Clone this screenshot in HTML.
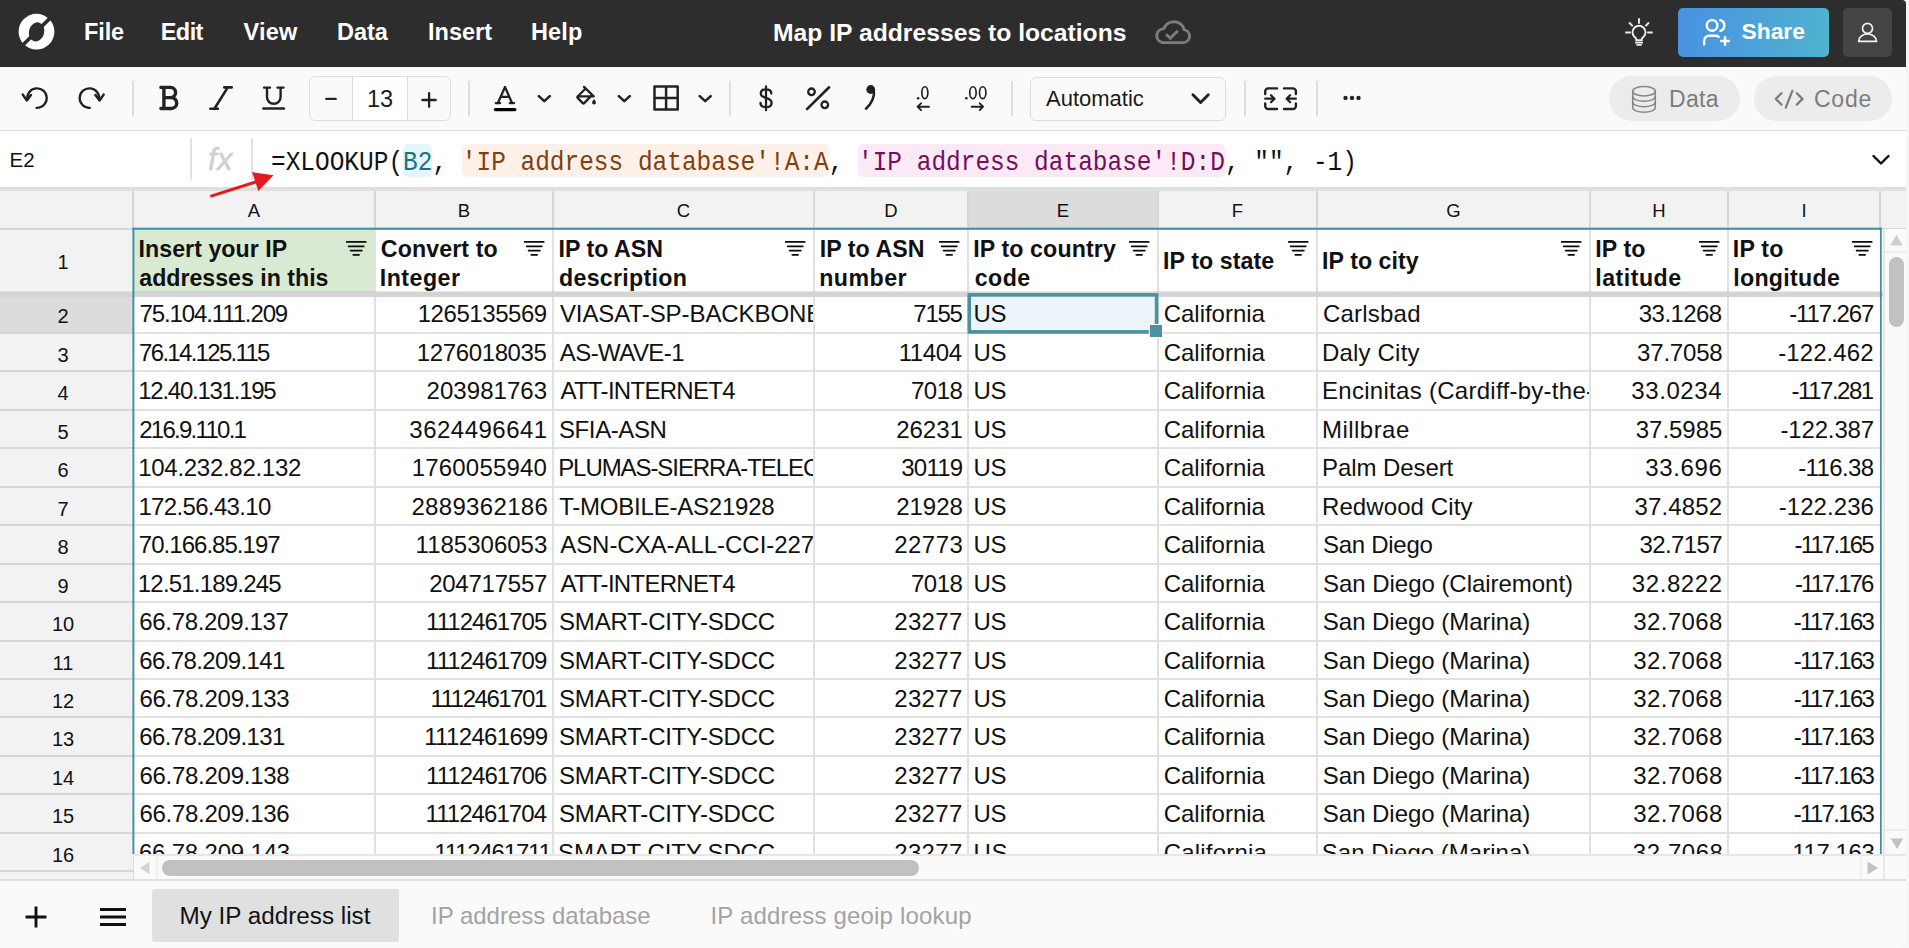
<!DOCTYPE html>
<html><head><meta charset="utf-8"><title>Map IP addresses to locations</title>
<style>
*{box-sizing:border-box;margin:0;padding:0}
html,body{width:1909px;height:948px;overflow:hidden;background:#f6f6f6;font-family:"Liberation Sans",sans-serif;color:#111}
#app{position:absolute;left:0;top:0;width:1906px;height:948px;overflow:hidden;border-radius:0 4px 7px 0;background:#fafafa}
.abs{position:absolute}
.t{position:absolute;white-space:nowrap}
.mono{font-family:"Liberation Mono",monospace}

#topbar{position:absolute;left:0;top:0;width:1906px;height:67px;background:#2d2d2d}
.menu{position:absolute;top:17px;height:30px;line-height:30px;font-weight:bold;font-size:23.500px;color:#fff;white-space:nowrap}
#title{position:absolute;top:18px;height:30px;line-height:30px;font-weight:bold;font-size:24.700px;color:#fff;white-space:nowrap}

#toolbar{position:absolute;left:0;top:67px;width:1906px;height:64px;background:#fafafa;border-bottom:1px solid #dcdcdc}
#tbsvg{position:absolute;left:0;top:0}
.k{fill:none;stroke:#222;stroke-linecap:round;stroke-linejoin:round}
.pill{position:absolute;top:9px;height:45px;border-radius:23px;background:#ececec;color:#7c7c7c;font-size:23px;line-height:45px}
.tbx{position:absolute;border:1px solid #dcdcdc;border-radius:6px;background:#fafafa}

#fbar{position:absolute;left:0;top:131px;width:1906px;height:56px;background:#fff}
#fband{position:absolute;left:0;top:187px;width:1906px;height:4px;background:#dfdfdf}
.fsep{position:absolute;top:7px;height:42px;width:2px;background:#e2e2e2}
#formula{position:absolute;left:271px;top:16.800px;font-size:24.460px;line-height:32px;transform:scaleY(1.140);transform-origin:0 22.520px;white-space:pre;color:#111;font-family:"Liberation Mono",monospace}
#formula .r1{color:#1b7286}
#formula .r2{color:#80400f}
#formula .r3{color:#730f5c}
.hl{position:absolute;top:13px;height:32.500px;border-radius:5px}

#grid{position:absolute;left:0;top:191px;width:1906px;height:689px;background:#fff;overflow:hidden}
.ch{position:absolute;top:0;height:37px;background:#f2f2f2;border-right:2px solid #d6d6d6;text-align:center;font-size:18.500px;line-height:40px;color:#111}
.rh{position:absolute;left:0;width:133px;padding-right:7px;background:#f2f2f2;text-align:center;font-size:20px;color:#111}
.c{position:absolute;white-space:nowrap;overflow:hidden;font-size:24px;line-height:38px;color:#111;padding:0 6px}
.c.r{text-align:right}
.c b{font-weight:normal;margin:0 -3.840px 0 -1.100px}
.c i{font-style:normal;margin:0 -1.250px}
.c.n{letter-spacing:calc(var(--r) + 0.860px)}
.hc{position:absolute;overflow:hidden;font-size:23.200px;line-height:29px;font-weight:bold;color:#111;padding:0 6px;white-space:nowrap}
.vl{position:absolute;width:2px;background:#e1e1e1}
.ghl{position:absolute;height:2px;background:#e1e1e1}
.flt{position:absolute;fill:none;stroke:#0a0a0a;stroke-width:1.750;stroke-linecap:round}

#hscroll{position:absolute;left:133px;top:854px;width:1773px;height:26px;background:#fafafa;border-top:2px solid #e7e7e7}
#vscroll{position:absolute;left:1883px;top:229px;width:23px;height:626px;background:#fafafa;border-left:2px solid #e7e7e7}
#bbar{position:absolute;left:0;top:879px;width:1906px;height:69px;background:#fafafa;border-top:2px solid #dfdfdf}
.tab{position:absolute;top:8px;height:53px;line-height:53px;font-size:24px;white-space:nowrap;color:#a3a3a3}
</style></head>
<body><div id="app">
<div id="topbar">
<svg class="abs" style="left:16px;top:12px" width="42" height="42" viewBox="16 12 42 42">
<circle cx="36.500" cy="31.700" r="17.900" fill="#fff"/>
<ellipse cx="36.600" cy="31.900" rx="7.600" ry="9.700" transform="rotate(14 36.600 31.900)" fill="#2d2d2d"/>
<path d="M50.600 17.600 L22.600 45.200" stroke="#2d2d2d" stroke-width="3.600"/>
</svg>
<div class="menu" style="left:84px;letter-spacing:-0.1px">File</div>
<div class="menu" style="left:160.8px;letter-spacing:-0.6px">Edit</div>
<div class="menu" style="left:243.5px;letter-spacing:0.2px">View</div>
<div class="menu" style="left:337px;letter-spacing:0px">Data</div>
<div class="menu" style="left:428px;letter-spacing:0px">Insert</div>
<div class="menu" style="left:531px;letter-spacing:0.15px">Help</div>
<div id="title" style="left:773px">Map IP addresses to locations</div>
<svg class="abs" style="left:1153px;top:17px" width="40" height="32" viewBox="0 0 40 32" fill="none" stroke="#7c7c7c" stroke-width="3" stroke-linecap="round" stroke-linejoin="round">
<g transform="translate(-0.300 0.300) scale(1 0.940)"><path d="M10 27 h20 a7 7 0 0 0 1.500 -13.800 a10.500 10.500 0 0 0 -20.300 -1.200 a7.600 7.600 0 0 0 -1.200 15 z"/>
<path d="M13.300 18 l4.300 4.300 l7.500 -8" stroke-linecap="butt" stroke-linejoin="miter"/></g>
</svg>
<svg class="abs" style="left:1620px;top:12px" width="38" height="40" viewBox="1620 12 38 40" fill="none" stroke="#ececec" stroke-width="1.900" stroke-linecap="butt" stroke-linejoin="round">
<path d="M1639 18.300 V23.800 M1629.100 22.500 L1632.700 26.200 M1649 22.500 L1645.400 26.200 M1625.300 32.500 H1630.800 M1647.200 32.500 H1652.700"/>
<path d="M1636.200 40.200 V39 Q1636 37.800 1634.400 36.900 A6.500 6.500 0 1 1 1643.600 36.900 Q1642 37.800 1641.800 39 V40.200 Z"/>
<path d="M1635 42.600 H1643 M1636.400 44.800 H1641.700" stroke-width="1.700"/>
</svg>
<div class="abs" style="left:1678px;top:8px;width:151px;height:49px;border-radius:5px;background:linear-gradient(100deg,#4a90e2 0%,#4fb4cf 100%)">
<svg class="abs" style="left:22px;top:8px" width="36" height="34" viewBox="1700 16 36 34" fill="none" stroke="#fff" stroke-width="2.400" stroke-linecap="round" stroke-linejoin="round">
<circle cx="1712.100" cy="25.400" r="5.300"/>
<path d="M1704.200 44.200 V40.700 a5 5 0 0 1 5 -5 h6.300 a5 5 0 0 1 3.100 1.100"/>
<path d="M1720.400 20.100 a5.600 5.600 0 0 1 0 10.700"/>
<path d="M1725.050 36.200 v9.600 M1720.200 41 h9.700" stroke-linecap="butt"/>
</svg>
<div class="t" style="left:63.500px;top:8.200px;font-size:22.800px;line-height:30px;font-weight:bold;color:#fff">Share</div>
</div>
<div class="abs" style="left:1843px;top:8px;width:49px;height:49px;border-radius:5px;background:#444">
<svg class="abs" style="left:10px;top:10px" width="30" height="30" viewBox="1853 18 30 30" fill="none" stroke="#f2f2f2" stroke-width="1.700" stroke-linejoin="round">
<circle cx="1867.500" cy="28.400" r="5"/>
<path d="M1858.600 41.400 a8.950 7.400 0 0 1 17.900 0 z"/>
</svg></div>
</div>
<div id="toolbar">
<div class="tbx" style="left:309px;top:9px;width:142px;height:45px;overflow:hidden">
<div class="abs" style="left:42px;top:0;width:56px;height:43px;background:#fff;border-left:1px solid #dcdcdc;border-right:1px solid #dcdcdc"></div>
<div class="t" style="left:42px;width:56px;text-align:center;top:7px;font-size:23.500px;line-height:30px;color:#1a1a1a">13</div>
</div>
<div class="tbx" style="left:1030px;top:10px;width:196px;height:44px">
<div class="t" style="left:15px;top:6px;font-size:22px;line-height:30px;color:#1a1a1a">Automatic</div>
</div>
<svg id="tbsvg" width="1906" height="64" viewBox="0 67 1906 64"><path class="k" stroke-width="2.300" stroke-linecap="butt" d="M27.400 99.800 A9.750 9.750 0 1 1 36.600 107.800"/>
<path class="k" stroke-width="2.500" stroke-linecap="butt" stroke-linejoin="miter" d="M22.800 94.600 L26.700 100.400 L31 95"/>
<path class="k" stroke-width="2.300" stroke-linecap="butt" d="M99 99.800 A9.750 9.750 0 1 0 89.800 107.800"/>
<path class="k" stroke-width="2.500" stroke-linecap="butt" stroke-linejoin="miter" d="M103.600 94.600 L99.700 100.400 L95.400 95"/>
<rect x="132" y="81" width="2" height="35" fill="#dedede"/>
<rect x="468" y="81" width="2" height="35" fill="#dedede"/>
<rect x="729" y="81" width="2" height="35" fill="#dedede"/>
<rect x="1011" y="81" width="2" height="35" fill="#dedede"/>
<rect x="1244" y="81" width="2" height="35" fill="#dedede"/>
<rect x="1316" y="81" width="2" height="35" fill="#dedede"/>
<path class="k" stroke-width="3.400" d="M163.900 87.400 V108.500 M160.900 87.400 H170.500 a5.100 5.100 0 0 1 0 10.200 H163.900 M163.900 97.600 H171.300 a5.450 5.450 0 0 1 0 10.900 H160.900"/>
<path class="k" stroke-width="2.600" d="M224.300 87.400 H231.700 M210.400 108.800 H217.900 M227.800 87.400 L214.400 108.800"/>
<path class="k" stroke-width="2.400" d="M264 87.600 H270 M277.500 87.600 H283.500 M267 87.600 V97 a6.800 6.800 0 0 0 13.600 0 V87.600"/>
<path class="k" stroke-width="2.700" d="M263.500 108.500 H283.800"/>
<path class="k" stroke-width="2.400" stroke-linecap="butt" d="M326.400 98.900 H335.600"/>
<path class="k" stroke-width="2.300" stroke-linecap="butt" d="M422.400 100 H435.800 M429.100 93.200 V106.800"/>
<path class="k" stroke-width="2.300" d="M497.900 103 L505 87 L512 103 M500.600 96.800 H509.400 M495.800 103.100 H500.200 M509.800 103.100 H514.100"/>
<path d="M495.400 109.600 H514.900" style="fill:none;stroke:#000;stroke-width:3.200;stroke-linecap:round"/>
<path class="k" stroke-width="2.600" stroke-linecap="butt" stroke-linejoin="miter" d="M538.80 96.100 L544.3 101.100 L549.80 96.100"/>
<path class="k" stroke-width="2.600" stroke-linecap="butt" stroke-linejoin="miter" d="M618.80 96.100 L624.3 101.100 L629.80 96.100"/>
<path class="k" stroke-width="2.600" stroke-linecap="butt" stroke-linejoin="miter" d="M699.70 96.100 L705.2 101.100 L710.70 96.100"/>
<path class="k" stroke-width="2.300" d="M584 86.900 L593.700 96.400 H577.600 M585.600 88.500 L577.600 96.500 Q576.900 97.200 577.600 97.900 L582.800 103.100 Q583.500 103.800 584.200 103.100 L590.500 96.600"/>
<path d="M594.050 99.100 C595.400 100.800 596 101.900 596 102.600 a1.950 1.950 0 0 1 -3.900 0 C592.100 101.900 592.700 100.800 594.050 99.100 z" fill="#222"/>
<path d="M576.400 109.600 H595.800" style="fill:none;stroke:#fff;stroke-width:2.700;stroke-linecap:round"/>
<path class="k" stroke-width="2.500" stroke-linejoin="miter" d="M654.500 86.400 H677.700 V109.600 H654.500 Z M666.100 86.400 V109.600 M654.500 98 H677.700"/>
<path class="k" stroke-width="2.300" d="M771.300 93.600 C771.300 90.900 769.200 89.300 766 89.300 C762.800 89.300 760.800 90.900 760.800 93.400 C760.800 96.100 763.100 97.100 766 97.900 C769.200 98.800 771.600 99.900 771.600 102.900 C771.600 105.700 769.300 107.200 766 107.200 C762.700 107.200 760.500 105.600 760.500 102.800 M766 86.400 V110.200"/>
<path class="k" stroke-width="2.600" d="M807 109.100 L829.100 87.300"/>
<circle class="k" stroke-width="2.300" cx="811.500" cy="91.800" r="3.300"/><circle class="k" stroke-width="2.300" cx="824.800" cy="104.800" r="3.300"/>
<circle cx="870.700" cy="89.500" r="4.400" fill="#222"/>
<path class="k" stroke-width="2.600" d="M873.800 90 C874.800 97 871 104 866 108.700"/>
<circle cx="918.100" cy="98.300" r="1.250" fill="#222"/>
<ellipse class="k" stroke-width="1.700" cx="924.850" cy="92.700" rx="3" ry="5.950"/>
<path class="k" stroke-width="1.900" d="M929 106.700 H918 M921 103.300 L917.600 106.700 L921 110.100"/>
<circle cx="966.300" cy="98.300" r="1.250" fill="#222"/>
<ellipse class="k" stroke-width="1.700" cx="972.950" cy="92.700" rx="3.200" ry="5.950"/><ellipse class="k" stroke-width="1.700" cx="982.700" cy="92.700" rx="3.200" ry="5.950"/>
<path class="k" stroke-width="1.900" d="M971.700 106.700 H982.700 M979.700 103.300 L983.100 106.700 L979.700 110.100"/>
<path class="k" stroke-width="2.900" stroke-linecap="butt" stroke-linejoin="miter" d="M1192.900 94.800 L1200.600 102.500 L1208.300 94.800"/>
<path class="k" stroke-width="2.400" d="M1277 88.400 H1268.200 a3 3 0 0 0 -3 3 V94 M1265.200 103.400 V106 a3 3 0 0 0 3 3 H1277 M1284 88.400 H1292.900 a3 3 0 0 1 3 3 V94 M1295.900 103.400 V106 a3 3 0 0 1 -3 3 H1284"/>
<path class="k" stroke-width="2.200" d="M1265.200 98.700 H1274.400 M1271 95.200 L1274.500 98.700 L1271 102.200 M1295.900 98.700 H1286.700 M1290.100 95.200 L1286.600 98.700 L1290.100 102.200"/>
<circle cx="1345.5" cy="97.900" r="2.200" fill="#222"/>
<circle cx="1352" cy="97.900" r="2.200" fill="#222"/>
<circle cx="1358.5" cy="97.900" r="2.200" fill="#222"/></svg>
<div class="pill" style="left:1609px;width:131px">
<svg class="abs" style="left:21px;top:8px" width="28" height="30" viewBox="0 0 28 30" fill="none" stroke="#858585" stroke-width="1.500" stroke-linecap="round"><ellipse cx="14" cy="7.200" rx="11.300" ry="4.700"/><path d="M2.700 7.200 v16.300 c0 2.600 5 4.700 11.300 4.700 s11.300 -2.100 11.300 -4.700 v-16.300"/><path d="M2.700 12.600 c0 2.600 5 4.700 11.300 4.700 s11.300 -2.100 11.300 -4.700 M2.700 18 c0 2.600 5 4.700 11.300 4.700 s11.300 -2.100 11.300 -4.700"/></svg>
<div class="t" style="left:60px;top:1px;letter-spacing:0.300px">Data</div></div>
<div class="pill" style="left:1754px;width:138px">
<svg class="abs" style="left:19px;top:11px" width="32" height="24" viewBox="0 0 32 24" fill="none" stroke="#7c7c7c" stroke-width="2.200" stroke-linecap="round" stroke-linejoin="round"><path d="M8.500 6.200 L2.800 11.900 L8.500 17.600 M23.800 6.200 L29.500 11.900 L23.800 17.600 M19.300 3.800 L12.800 20.600"/></svg>
<div class="t" style="left:60px;top:1px;letter-spacing:0.750px">Code</div></div>
</div>
<div id="fbar">
<div class="t" style="left:9.500px;top:15px;font-size:20.500px;line-height:28px;color:#111">E2</div>
<div class="fsep" style="left:190px"></div>
<div class="t" style="left:208px;top:11px;font-size:31px;line-height:36px;font-style:italic;color:#d0d0d0;-webkit-text-stroke:0.600px #d0d0d0;letter-spacing:0.300px">fx</div>
<div class="fsep" style="left:251px"></div>
<div class="hl" style="left:403.08px;width:29.35px;background:#e4f6fb"></div>
<div class="hl" style="left:461.79px;width:366.9px;background:#fdf0e9"></div>
<div class="hl" style="left:858.04px;width:366.9px;background:#fbe9f6"></div>
<div id="formula">=XLOOKUP(<span class="r1">B2</span>, <span class="r2">'IP address database'!A:A</span>, <span class="r3">'IP address database'!D:D</span>, "", -1)</div>
<svg class="abs" style="left:1870px;top:21px" width="22" height="16" viewBox="0 0 22 16" fill="none" stroke="#111" stroke-width="2.400" stroke-linecap="round" stroke-linejoin="round"><path d="M3.500 4 l7.500 7.500 l7.500 -7.500"/></svg>
</div><div id="fband"></div>
<div id="grid">
<div class="abs" style="left:0;top:0;width:1906px;height:37px;background:#f2f2f2"></div>
<div class="ch" style="left:0;width:134px"></div>
<div class="ch" style="left:134px;width:242px">A</div>
<div class="ch" style="left:376px;width:178px">B</div>
<div class="ch" style="left:554px;width:261px">C</div>
<div class="ch" style="left:815px;width:154px">D</div>
<div class="ch" style="left:969px;width:190px;background:#dcdcdc">E</div>
<div class="ch" style="left:1159px;width:159px">F</div>
<div class="ch" style="left:1318px;width:273px">G</div>
<div class="ch" style="left:1591px;width:138px">H</div>
<div class="ch" style="left:1729px;width:152px">I</div>
<div class="abs" style="left:0;top:37px;width:1906px;height:2px;background:#d6d6d6"></div>
<div class="rh" style="top:39px;height:64px;line-height:64px">1</div>
<div class="abs" style="left:134px;top:39px;width:241px;height:64px;background:#d9ead3"></div>
<div class="hc" style="left:134px;top:43.5px;width:216px;letter-spacing:0.047px;padding-left:4.5px">Insert your IP</div>
<div class="hc" style="left:134px;top:72.5px;width:216px;letter-spacing:-0.012px;padding-left:5.25px">addresses in this</div>
<svg class="flt" style="left:343px;top:47px" width="26" height="22" viewBox="343 238 26 22"><path d="M346.70 241.900 h19 M348.60 246.300 h15.200 M350.55 250.600 h11.300 M353.30 254.800 h5.800"/></svg>
<div class="abs" style="left:376px;top:39px;width:177px;height:64px"></div>
<div class="hc" style="left:376px;top:43.5px;width:152px;letter-spacing:0.111px;padding-left:4.8px">Convert to</div>
<div class="hc" style="left:376px;top:72.5px;width:152px;letter-spacing:0.467px;padding-left:3.8px">Integer</div>
<svg class="flt" style="left:521px;top:47px" width="26" height="22" viewBox="521 238 26 22"><path d="M524.70 241.900 h19 M526.60 246.300 h15.200 M528.55 250.600 h11.300 M531.30 254.800 h5.800"/></svg>
<div class="abs" style="left:554px;top:39px;width:260px;height:64px"></div>
<div class="hc" style="left:554px;top:43.5px;width:235px;letter-spacing:0.0px;padding-left:4.6px">IP to ASN</div>
<div class="hc" style="left:554px;top:72.5px;width:235px;letter-spacing:0.28px;padding-left:5.05px">description</div>
<svg class="flt" style="left:782px;top:47px" width="26" height="22" viewBox="782 238 26 22"><path d="M785.70 241.900 h19 M787.60 246.300 h15.200 M789.55 250.600 h11.300 M792.30 254.800 h5.800"/></svg>
<div class="abs" style="left:815px;top:39px;width:153px;height:64px"></div>
<div class="hc" style="left:815px;top:43.5px;width:128px;letter-spacing:0.05px;padding-left:4.7px">IP to ASN</div>
<div class="hc" style="left:815px;top:72.5px;width:128px;letter-spacing:0.48px;padding-left:4.15px">number</div>
<svg class="flt" style="left:936px;top:47px" width="26" height="22" viewBox="936 238 26 22"><path d="M939.70 241.900 h19 M941.60 246.300 h15.200 M943.55 250.600 h11.300 M946.30 254.800 h5.800"/></svg>
<div class="abs" style="left:969px;top:39px;width:189px;height:64px"></div>
<div class="hc" style="left:969px;top:43.5px;width:164px;letter-spacing:0.116px;padding-left:4.15px">IP to country</div>
<div class="hc" style="left:969px;top:72.5px;width:164px;letter-spacing:0.467px;padding-left:5.65px">code</div>
<svg class="flt" style="left:1126px;top:47px" width="26" height="22" viewBox="1126 238 26 22"><path d="M1129.70 241.900 h19 M1131.60 246.300 h15.200 M1133.55 250.600 h11.300 M1136.30 254.800 h5.800"/></svg>
<div class="abs" style="left:1159px;top:39px;width:158px;height:64px"></div>
<div class="hc" style="left:1159px;top:55.5px;width:133px;letter-spacing:0.08px;padding-left:4.0px">IP to state</div>
<svg class="flt" style="left:1285px;top:47px" width="26" height="22" viewBox="1285 238 26 22"><path d="M1288.70 241.900 h19 M1290.60 246.300 h15.200 M1292.55 250.600 h11.300 M1295.30 254.800 h5.800"/></svg>
<div class="abs" style="left:1318px;top:39px;width:272px;height:64px"></div>
<div class="hc" style="left:1318px;top:55.5px;width:247px;letter-spacing:0.044px;padding-left:4.1px">IP to city</div>
<svg class="flt" style="left:1558px;top:47px" width="26" height="22" viewBox="1558 238 26 22"><path d="M1561.70 241.900 h19 M1563.60 246.300 h15.200 M1565.55 250.600 h11.300 M1568.30 254.800 h5.800"/></svg>
<div class="abs" style="left:1591px;top:39px;width:137px;height:64px"></div>
<div class="hc" style="left:1591px;top:43.5px;width:112px;letter-spacing:0.1px;padding-left:4.3px">IP to</div>
<div class="hc" style="left:1591px;top:72.5px;width:112px;letter-spacing:0.486px;padding-left:4.3px">latitude</div>
<svg class="flt" style="left:1696px;top:47px" width="26" height="22" viewBox="1696 238 26 22"><path d="M1699.70 241.900 h19 M1701.60 246.300 h15.200 M1703.55 250.600 h11.300 M1706.30 254.800 h5.800"/></svg>
<div class="abs" style="left:1729px;top:39px;width:151px;height:64px"></div>
<div class="hc" style="left:1729px;top:43.5px;width:126px;letter-spacing:0.2px;padding-left:3.8px">IP to</div>
<div class="hc" style="left:1729px;top:72.5px;width:126px;letter-spacing:0.3px;padding-left:4.2px">longitude</div>
<svg class="flt" style="left:1848px;top:47px" width="26" height="22" viewBox="1848 238 26 22"><path d="M1852.70 241.900 h19 M1854.60 246.300 h15.200 M1856.55 250.600 h11.300 M1859.30 254.800 h5.800"/></svg>
<div class="rh" style="top:104px;height:37px;line-height:43px;background:#dcdcdc">2</div>
<div class="abs" style="left:0;top:141px;width:133px;height:2px;background:#d6d6d6"></div>
<div class="c" style="left:134px;top:104px;width:241px;height:37px;line-height:38px;letter-spacing:-1.123px;padding-left:5.55px">75.104.111.209</div>
<div class="c r" style="left:376px;top:104px;width:177px;height:37px;line-height:38px;letter-spacing:-0.444px;padding-right:6.256px">1265135569</div>
<div class="c" style="left:554px;top:104px;width:260px;height:37px;line-height:38px;letter-spacing:-0.07px;padding-left:5.9px">VIASAT-SP-BACKBONE</div>
<div class="c r" style="left:815px;top:104px;width:153px;height:37px;line-height:38px;letter-spacing:-1.267px;padding-right:6.383px">7155</div>
<div class="c" style="left:969px;top:104px;width:189px;height:37px;line-height:38px;letter-spacing:-0.4px;padding-left:4.5px">US</div>
<div class="c" style="left:1159px;top:104px;width:158px;height:37px;line-height:38px;letter-spacing:-0.023px;padding-left:4.7px">California</div>
<div class="c" style="left:1318px;top:104px;width:272px;height:37px;line-height:38px;letter-spacing:0.228px;padding-left:4.9px">Carlsbad</div>
<div class="c r" style="left:1591px;top:104px;width:137px;height:37px;line-height:38px;letter-spacing:-0.567px;padding-right:6.383px">33.1268</div>
<div class="c r" style="left:1729px;top:104px;width:151px;height:37px;line-height:38px;letter-spacing:-1.115px;padding-right:6.835px">-117.267</div>
<div class="rh" style="top:143px;height:36px;line-height:42px">3</div>
<div class="abs" style="left:0;top:179px;width:133px;height:2px;background:#d6d6d6"></div>
<div class="c" style="left:134px;top:143px;width:241px;height:36px;line-height:37px;letter-spacing:-1.7px;padding-left:5.1px">76.14.125.115</div>
<div class="c r" style="left:376px;top:143px;width:177px;height:36px;line-height:37px;letter-spacing:-0.378px;padding-right:6.472px">1276018035</div>
<div class="c" style="left:554px;top:143px;width:260px;height:36px;line-height:37px;letter-spacing:-0.575px;padding-left:5.8px">AS-WAVE-1</div>
<div class="c r" style="left:815px;top:143px;width:153px;height:36px;line-height:37px;letter-spacing:-0.35px;padding-right:6.15px">11404</div>
<div class="c" style="left:969px;top:143px;width:189px;height:36px;line-height:37px;letter-spacing:-0.4px;padding-left:4.5px">US</div>
<div class="c" style="left:1159px;top:143px;width:158px;height:36px;line-height:37px;letter-spacing:-0.023px;padding-left:4.7px">California</div>
<div class="c" style="left:1318px;top:143px;width:272px;height:36px;line-height:37px;letter-spacing:0.2px;padding-left:3.9px">Daly City</div>
<div class="c r" style="left:1591px;top:143px;width:137px;height:36px;line-height:37px;letter-spacing:-0.2px;padding-right:5.55px">37.7058</div>
<div class="c r" style="left:1729px;top:143px;width:151px;height:36px;line-height:37px;letter-spacing:0.085px;padding-right:6.385px">-122.462</div>
<div class="rh" style="top:181px;height:37px;line-height:43px">4</div>
<div class="abs" style="left:0;top:218px;width:133px;height:2px;background:#d6d6d6"></div>
<div class="c" style="left:134px;top:181px;width:241px;height:37px;line-height:38px;letter-spacing:-1.25px;padding-left:4.2px">12.40.131.195</div>
<div class="c r" style="left:376px;top:181px;width:177px;height:37px;line-height:38px;letter-spacing:0.05px;padding-right:5.85px">203981763</div>
<div class="c" style="left:554px;top:181px;width:260px;height:37px;line-height:38px;letter-spacing:-0.717px;padding-left:6.55px">ATT-INTERNET4</div>
<div class="c r" style="left:815px;top:181px;width:153px;height:37px;line-height:38px;letter-spacing:-0.466px;padding-right:5.534px">7018</div>
<div class="c" style="left:969px;top:181px;width:189px;height:37px;line-height:38px;letter-spacing:-0.4px;padding-left:4.5px">US</div>
<div class="c" style="left:1159px;top:181px;width:158px;height:37px;line-height:38px;letter-spacing:-0.023px;padding-left:4.7px">California</div>
<div class="c" style="left:1318px;top:181px;width:272px;height:37px;line-height:38px;letter-spacing:0.283px;padding-left:4.0px">Encinitas (Cardiff-by-the-Sea)</div>
<div class="c r" style="left:1591px;top:181px;width:137px;height:37px;line-height:38px;letter-spacing:0.6px;padding-right:5.8px">33.0234</div>
<div class="c r" style="left:1729px;top:181px;width:151px;height:37px;line-height:38px;letter-spacing:-1.486px;padding-right:7.314px">-117.281</div>
<div class="rh" style="top:220px;height:36px;line-height:42px">5</div>
<div class="abs" style="left:0;top:256px;width:133px;height:2px;background:#d6d6d6"></div>
<div class="c" style="left:134px;top:220px;width:241px;height:36px;line-height:37px;letter-spacing:-1.72px;padding-left:5.15px">216.9.110.1</div>
<div class="c r" style="left:376px;top:220px;width:177px;height:36px;line-height:37px;letter-spacing:0.489px;padding-right:5.289px">3624496641</div>
<div class="c" style="left:554px;top:220px;width:260px;height:36px;line-height:37px;letter-spacing:-0.4px;padding-left:5.0px">SFIA-ASN</div>
<div class="c r" style="left:815px;top:220px;width:153px;height:36px;line-height:37px;letter-spacing:-0.05px;padding-right:5.25px">26231</div>
<div class="c" style="left:969px;top:220px;width:189px;height:36px;line-height:37px;letter-spacing:-0.4px;padding-left:4.5px">US</div>
<div class="c" style="left:1159px;top:220px;width:158px;height:36px;line-height:37px;letter-spacing:-0.023px;padding-left:4.7px">California</div>
<div class="c" style="left:1318px;top:220px;width:272px;height:36px;line-height:37px;letter-spacing:0.457px;padding-left:4.05px">Millbrae</div>
<div class="c r" style="left:1591px;top:220px;width:137px;height:36px;line-height:37px;letter-spacing:-0.034px;padding-right:5.716px">37.5985</div>
<div class="c r" style="left:1729px;top:220px;width:151px;height:36px;line-height:37px;letter-spacing:-0.143px;padding-right:6.007px">-122.387</div>
<div class="rh" style="top:258px;height:37px;line-height:43px">6</div>
<div class="abs" style="left:0;top:295px;width:133px;height:2px;background:#d6d6d6"></div>
<div class="c" style="left:134px;top:258px;width:241px;height:37px;line-height:38px;letter-spacing:-0.292px;padding-left:4.25px">104.232.82.132</div>
<div class="c r" style="left:376px;top:258px;width:177px;height:37px;line-height:38px;letter-spacing:0.2px;padding-right:5.85px">1760055940</div>
<div class="c" style="left:554px;top:258px;width:260px;height:37px;line-height:38px;letter-spacing:-1.074px;padding-left:4.2px">PLUMAS-SIERRA-TELECOM</div>
<div class="c r" style="left:815px;top:258px;width:153px;height:37px;line-height:38px;letter-spacing:-0.8px;padding-right:5.75px">30119</div>
<div class="c" style="left:969px;top:258px;width:189px;height:37px;line-height:38px;letter-spacing:-0.4px;padding-left:4.5px">US</div>
<div class="c" style="left:1159px;top:258px;width:158px;height:37px;line-height:38px;letter-spacing:-0.023px;padding-left:4.7px">California</div>
<div class="c" style="left:1318px;top:258px;width:272px;height:37px;line-height:38px;letter-spacing:-0.08px;padding-left:4.05px">Palm Desert</div>
<div class="c r" style="left:1591px;top:258px;width:137px;height:37px;line-height:38px;letter-spacing:0.64px;padding-right:5.49px">33.696</div>
<div class="c r" style="left:1729px;top:258px;width:151px;height:37px;line-height:38px;letter-spacing:-0.634px;padding-right:6.566px">-116.38</div>
<div class="rh" style="top:297px;height:36px;line-height:42px">7</div>
<div class="abs" style="left:0;top:333px;width:133px;height:2px;background:#d6d6d6"></div>
<div class="c" style="left:134px;top:297px;width:241px;height:36px;line-height:37px;letter-spacing:-0.655px;padding-left:4.4px">172.56.43.10</div>
<div class="c r" style="left:376px;top:297px;width:177px;height:36px;line-height:37px;letter-spacing:0.334px;padding-right:4.784px">2889362186</div>
<div class="c" style="left:554px;top:297px;width:260px;height:36px;line-height:37px;letter-spacing:-0.213px;padding-left:5.15px">T-MOBILE-AS21928</div>
<div class="c r" style="left:815px;top:297px;width:153px;height:36px;line-height:37px;letter-spacing:-0.05px;padding-right:5.25px">21928</div>
<div class="c" style="left:969px;top:297px;width:189px;height:36px;line-height:37px;letter-spacing:-0.4px;padding-left:4.5px">US</div>
<div class="c" style="left:1159px;top:297px;width:158px;height:36px;line-height:37px;letter-spacing:-0.023px;padding-left:4.7px">California</div>
<div class="c" style="left:1318px;top:297px;width:272px;height:36px;line-height:37px;letter-spacing:0.091px;padding-left:4.0px">Redwood City</div>
<div class="c r" style="left:1591px;top:297px;width:137px;height:36px;line-height:37px;letter-spacing:0.133px;padding-right:5.883px">37.4852</div>
<div class="c r" style="left:1729px;top:297px;width:151px;height:36px;line-height:37px;letter-spacing:0.058px;padding-right:6.058px">-122.236</div>
<div class="rh" style="top:335px;height:37px;line-height:43px">8</div>
<div class="abs" style="left:0;top:372px;width:133px;height:2px;background:#d6d6d6"></div>
<div class="c" style="left:134px;top:335px;width:241px;height:37px;line-height:38px;letter-spacing:-0.966px;padding-left:4.8px">70.166.85.197</div>
<div class="c r" style="left:376px;top:335px;width:177px;height:37px;line-height:38px;letter-spacing:-0.0px;padding-right:5.7px">1185306053</div>
<div class="c" style="left:554px;top:335px;width:260px;height:37px;line-height:38px;letter-spacing:-0.042px;padding-left:6.2px">ASN-CXA-ALL-CCI-22773-RDC</div>
<div class="c r" style="left:815px;top:335px;width:153px;height:37px;line-height:38px;letter-spacing:0.45px;padding-right:4.75px">22773</div>
<div class="c" style="left:969px;top:335px;width:189px;height:37px;line-height:38px;letter-spacing:-0.4px;padding-left:4.5px">US</div>
<div class="c" style="left:1159px;top:335px;width:158px;height:37px;line-height:38px;letter-spacing:-0.023px;padding-left:4.7px">California</div>
<div class="c" style="left:1318px;top:335px;width:272px;height:37px;line-height:38px;letter-spacing:-0.274px;padding-left:4.95px">San Diego</div>
<div class="c r" style="left:1591px;top:335px;width:137px;height:37px;line-height:38px;letter-spacing:-0.6px;padding-right:6.05px">32.7157</div>
<div class="c r" style="left:1729px;top:335px;width:151px;height:37px;line-height:38px;letter-spacing:-1.858px;padding-right:7.292px">-117.165</div>
<div class="rh" style="top:374px;height:36px;line-height:42px">9</div>
<div class="abs" style="left:0;top:410px;width:133px;height:2px;background:#d6d6d6"></div>
<div class="c" style="left:134px;top:374px;width:241px;height:36px;line-height:37px;letter-spacing:-0.8px;padding-left:3.8px">12.51.189.245</div>
<div class="c r" style="left:376px;top:374px;width:177px;height:36px;line-height:37px;letter-spacing:-0.225px;padding-right:5.775px">204717557</div>
<div class="c" style="left:554px;top:374px;width:260px;height:36px;line-height:37px;letter-spacing:-0.717px;padding-left:6.55px">ATT-INTERNET4</div>
<div class="c r" style="left:815px;top:374px;width:153px;height:36px;line-height:37px;letter-spacing:-0.466px;padding-right:5.534px">7018</div>
<div class="c" style="left:969px;top:374px;width:189px;height:36px;line-height:37px;letter-spacing:-0.4px;padding-left:4.5px">US</div>
<div class="c" style="left:1159px;top:374px;width:158px;height:36px;line-height:37px;letter-spacing:-0.023px;padding-left:4.7px">California</div>
<div class="c" style="left:1318px;top:374px;width:272px;height:36px;line-height:37px;letter-spacing:-0.038px;padding-left:5.05px">San Diego (Clairemont)</div>
<div class="c r" style="left:1591px;top:374px;width:137px;height:36px;line-height:37px;letter-spacing:0.6px;padding-right:5.3px">32.8222</div>
<div class="c r" style="left:1729px;top:374px;width:151px;height:36px;line-height:37px;letter-spacing:-1.971px;padding-right:7.729px">-117.176</div>
<div class="rh" style="top:412px;height:37px;line-height:43px">10</div>
<div class="abs" style="left:0;top:449px;width:133px;height:2px;background:#d6d6d6"></div>
<div class="c" style="left:134px;top:412px;width:241px;height:37px;line-height:38px;letter-spacing:-0.317px;padding-left:5.25px">66.78.209.137</div>
<div class="c r" style="left:376px;top:412px;width:177px;height:37px;line-height:38px;letter-spacing:-0.955px;padding-right:6.595px">1112461705</div>
<div class="c" style="left:554px;top:412px;width:260px;height:37px;line-height:38px;letter-spacing:-0.185px;padding-left:5.05px">SMART-CITY-SDCC</div>
<div class="c r" style="left:815px;top:412px;width:153px;height:37px;line-height:38px;letter-spacing:0.35px;padding-right:5.3px">23277</div>
<div class="c" style="left:969px;top:412px;width:189px;height:37px;line-height:38px;letter-spacing:-0.4px;padding-left:4.5px">US</div>
<div class="c" style="left:1159px;top:412px;width:158px;height:37px;line-height:38px;letter-spacing:-0.023px;padding-left:4.7px">California</div>
<div class="c" style="left:1318px;top:412px;width:272px;height:37px;line-height:38px;letter-spacing:-0.036px;padding-left:4.85px">San Diego (Marina)</div>
<div class="c r" style="left:1591px;top:412px;width:137px;height:37px;line-height:38px;letter-spacing:0.4px;padding-right:5.3px">32.7068</div>
<div class="c r" style="left:1729px;top:412px;width:151px;height:37px;line-height:38px;letter-spacing:-1.686px;padding-right:6.764px">-117.163</div>
<div class="rh" style="top:451px;height:36px;line-height:42px">11</div>
<div class="abs" style="left:0;top:487px;width:133px;height:2px;background:#d6d6d6"></div>
<div class="c" style="left:134px;top:451px;width:241px;height:36px;line-height:37px;letter-spacing:-0.6px;padding-left:5.15px">66.78.209.141</div>
<div class="c r" style="left:376px;top:451px;width:177px;height:36px;line-height:37px;letter-spacing:-0.955px;padding-right:6.595px">1112461709</div>
<div class="c" style="left:554px;top:451px;width:260px;height:36px;line-height:37px;letter-spacing:-0.185px;padding-left:5.05px">SMART-CITY-SDCC</div>
<div class="c r" style="left:815px;top:451px;width:153px;height:36px;line-height:37px;letter-spacing:0.35px;padding-right:5.3px">23277</div>
<div class="c" style="left:969px;top:451px;width:189px;height:36px;line-height:37px;letter-spacing:-0.4px;padding-left:4.5px">US</div>
<div class="c" style="left:1159px;top:451px;width:158px;height:36px;line-height:37px;letter-spacing:-0.023px;padding-left:4.7px">California</div>
<div class="c" style="left:1318px;top:451px;width:272px;height:36px;line-height:37px;letter-spacing:-0.036px;padding-left:4.85px">San Diego (Marina)</div>
<div class="c r" style="left:1591px;top:451px;width:137px;height:36px;line-height:37px;letter-spacing:0.4px;padding-right:5.3px">32.7068</div>
<div class="c r" style="left:1729px;top:451px;width:151px;height:36px;line-height:37px;letter-spacing:-1.686px;padding-right:6.764px">-117.163</div>
<div class="rh" style="top:489px;height:36px;line-height:42px">12</div>
<div class="abs" style="left:0;top:525px;width:133px;height:2px;background:#d6d6d6"></div>
<div class="c" style="left:134px;top:489px;width:241px;height:36px;line-height:37px;letter-spacing:-0.267px;padding-left:5.4px">66.78.209.133</div>
<div class="c r" style="left:376px;top:489px;width:177px;height:36px;line-height:37px;letter-spacing:-1.467px;padding-right:7.183px">1112461701</div>
<div class="c" style="left:554px;top:489px;width:260px;height:36px;line-height:37px;letter-spacing:-0.185px;padding-left:5.05px">SMART-CITY-SDCC</div>
<div class="c r" style="left:815px;top:489px;width:153px;height:36px;line-height:37px;letter-spacing:0.35px;padding-right:5.3px">23277</div>
<div class="c" style="left:969px;top:489px;width:189px;height:36px;line-height:37px;letter-spacing:-0.4px;padding-left:4.5px">US</div>
<div class="c" style="left:1159px;top:489px;width:158px;height:36px;line-height:37px;letter-spacing:-0.023px;padding-left:4.7px">California</div>
<div class="c" style="left:1318px;top:489px;width:272px;height:36px;line-height:37px;letter-spacing:-0.036px;padding-left:4.85px">San Diego (Marina)</div>
<div class="c r" style="left:1591px;top:489px;width:137px;height:36px;line-height:37px;letter-spacing:0.4px;padding-right:5.3px">32.7068</div>
<div class="c r" style="left:1729px;top:489px;width:151px;height:36px;line-height:37px;letter-spacing:-1.686px;padding-right:6.764px">-117.163</div>
<div class="rh" style="top:527px;height:37px;line-height:43px">13</div>
<div class="abs" style="left:0;top:564px;width:133px;height:2px;background:#d6d6d6"></div>
<div class="c" style="left:134px;top:527px;width:241px;height:37px;line-height:38px;letter-spacing:-0.6px;padding-left:5.15px">66.78.209.131</div>
<div class="c r" style="left:376px;top:527px;width:177px;height:37px;line-height:38px;letter-spacing:-0.667px;padding-right:5.533px">1112461699</div>
<div class="c" style="left:554px;top:527px;width:260px;height:37px;line-height:38px;letter-spacing:-0.185px;padding-left:5.05px">SMART-CITY-SDCC</div>
<div class="c r" style="left:815px;top:527px;width:153px;height:37px;line-height:38px;letter-spacing:0.35px;padding-right:5.3px">23277</div>
<div class="c" style="left:969px;top:527px;width:189px;height:37px;line-height:38px;letter-spacing:-0.4px;padding-left:4.5px">US</div>
<div class="c" style="left:1159px;top:527px;width:158px;height:37px;line-height:38px;letter-spacing:-0.023px;padding-left:4.7px">California</div>
<div class="c" style="left:1318px;top:527px;width:272px;height:37px;line-height:38px;letter-spacing:-0.036px;padding-left:4.85px">San Diego (Marina)</div>
<div class="c r" style="left:1591px;top:527px;width:137px;height:37px;line-height:38px;letter-spacing:0.4px;padding-right:5.3px">32.7068</div>
<div class="c r" style="left:1729px;top:527px;width:151px;height:37px;line-height:38px;letter-spacing:-1.686px;padding-right:6.764px">-117.163</div>
<div class="rh" style="top:566px;height:36px;line-height:42px">14</div>
<div class="abs" style="left:0;top:602px;width:133px;height:2px;background:#d6d6d6"></div>
<div class="c" style="left:134px;top:566px;width:241px;height:36px;line-height:37px;letter-spacing:-0.267px;padding-left:5.4px">66.78.209.138</div>
<div class="c r" style="left:376px;top:566px;width:177px;height:36px;line-height:37px;letter-spacing:-0.955px;padding-right:6.595px">1112461706</div>
<div class="c" style="left:554px;top:566px;width:260px;height:36px;line-height:37px;letter-spacing:-0.185px;padding-left:5.05px">SMART-CITY-SDCC</div>
<div class="c r" style="left:815px;top:566px;width:153px;height:36px;line-height:37px;letter-spacing:0.35px;padding-right:5.3px">23277</div>
<div class="c" style="left:969px;top:566px;width:189px;height:36px;line-height:37px;letter-spacing:-0.4px;padding-left:4.5px">US</div>
<div class="c" style="left:1159px;top:566px;width:158px;height:36px;line-height:37px;letter-spacing:-0.023px;padding-left:4.7px">California</div>
<div class="c" style="left:1318px;top:566px;width:272px;height:36px;line-height:37px;letter-spacing:-0.036px;padding-left:4.85px">San Diego (Marina)</div>
<div class="c r" style="left:1591px;top:566px;width:137px;height:36px;line-height:37px;letter-spacing:0.4px;padding-right:5.3px">32.7068</div>
<div class="c r" style="left:1729px;top:566px;width:151px;height:36px;line-height:37px;letter-spacing:-1.686px;padding-right:6.764px">-117.163</div>
<div class="rh" style="top:604px;height:37px;line-height:43px">15</div>
<div class="abs" style="left:0;top:641px;width:133px;height:2px;background:#d6d6d6"></div>
<div class="c" style="left:134px;top:604px;width:241px;height:37px;line-height:38px;letter-spacing:-0.267px;padding-left:5.4px">66.78.209.136</div>
<div class="c r" style="left:376px;top:604px;width:177px;height:37px;line-height:38px;letter-spacing:-0.934px;padding-right:6.916px">1112461704</div>
<div class="c" style="left:554px;top:604px;width:260px;height:37px;line-height:38px;letter-spacing:-0.185px;padding-left:5.05px">SMART-CITY-SDCC</div>
<div class="c r" style="left:815px;top:604px;width:153px;height:37px;line-height:38px;letter-spacing:0.35px;padding-right:5.3px">23277</div>
<div class="c" style="left:969px;top:604px;width:189px;height:37px;line-height:38px;letter-spacing:-0.4px;padding-left:4.5px">US</div>
<div class="c" style="left:1159px;top:604px;width:158px;height:37px;line-height:38px;letter-spacing:-0.023px;padding-left:4.7px">California</div>
<div class="c" style="left:1318px;top:604px;width:272px;height:37px;line-height:38px;letter-spacing:-0.036px;padding-left:4.85px">San Diego (Marina)</div>
<div class="c r" style="left:1591px;top:604px;width:137px;height:37px;line-height:38px;letter-spacing:0.4px;padding-right:5.3px">32.7068</div>
<div class="c r" style="left:1729px;top:604px;width:151px;height:37px;line-height:38px;letter-spacing:-1.686px;padding-right:6.764px">-117.163</div>
<div class="rh" style="top:643px;height:36px;line-height:42px">16</div>
<div class="abs" style="left:0;top:679px;width:133px;height:2px;background:#d6d6d6"></div>
<div class="c" style="left:134px;top:643px;width:241px;height:36px;line-height:37px;letter-spacing:-0.184px;padding-left:4.9px">66.78.209.143</div>
<div class="c r" style="left:376px;top:643px;width:177px;height:36px;line-height:37px;letter-spacing:-1.178px;padding-right:2.372px">1112461711</div>
<div class="c" style="left:554px;top:643px;width:260px;height:36px;line-height:37px;letter-spacing:-0.114px;padding-left:4.05px">SMART-CITY-SDCC</div>
<div class="c r" style="left:815px;top:643px;width:153px;height:36px;line-height:37px;letter-spacing:0.35px;padding-right:5.3px">23277</div>
<div class="c" style="left:969px;top:643px;width:189px;height:36px;line-height:37px;letter-spacing:0.6px;padding-left:4.5px">US</div>
<div class="c" style="left:1159px;top:643px;width:158px;height:36px;line-height:37px;letter-spacing:0.2px;padding-left:4.7px">California</div>
<div class="c" style="left:1318px;top:643px;width:272px;height:36px;line-height:37px;letter-spacing:0.023px;padding-left:3.85px">San Diego (Marina)</div>
<div class="c r" style="left:1591px;top:643px;width:137px;height:36px;line-height:37px;letter-spacing:0.567px;padding-right:4.467px">32.7068</div>
<div class="c r" style="left:1729px;top:643px;width:151px;height:36px;line-height:37px;letter-spacing:-0.4px;padding-right:5.55px">-117.163</div>
<div class="rh" style="top:681px;height:12px"></div>
<div class="ghl" style="left:134px;top:141px;width:1746px"></div>
<div class="ghl" style="left:134px;top:179px;width:1746px"></div>
<div class="ghl" style="left:134px;top:218px;width:1746px"></div>
<div class="ghl" style="left:134px;top:256px;width:1746px"></div>
<div class="ghl" style="left:134px;top:295px;width:1746px"></div>
<div class="ghl" style="left:134px;top:333px;width:1746px"></div>
<div class="ghl" style="left:134px;top:372px;width:1746px"></div>
<div class="ghl" style="left:134px;top:410px;width:1746px"></div>
<div class="ghl" style="left:134px;top:449px;width:1746px"></div>
<div class="ghl" style="left:134px;top:487px;width:1746px"></div>
<div class="ghl" style="left:134px;top:525px;width:1746px"></div>
<div class="ghl" style="left:134px;top:564px;width:1746px"></div>
<div class="ghl" style="left:134px;top:602px;width:1746px"></div>
<div class="ghl" style="left:134px;top:641px;width:1746px"></div>
<div class="ghl" style="left:134px;top:679px;width:1746px"></div>
<div class="vl" style="left:374px;top:39px;height:660px"></div>
<div class="vl" style="left:552px;top:39px;height:660px"></div>
<div class="vl" style="left:813px;top:39px;height:660px"></div>
<div class="vl" style="left:967px;top:39px;height:660px"></div>
<div class="vl" style="left:1157px;top:39px;height:660px"></div>
<div class="vl" style="left:1316px;top:39px;height:660px"></div>
<div class="vl" style="left:1589px;top:39px;height:660px"></div>
<div class="vl" style="left:1727px;top:39px;height:660px"></div>
<div class="abs" style="left:0;top:100px;width:1883px;height:1px;background:rgba(0,0,0,0.08)"></div>
<div class="abs" style="left:0;top:101px;width:1883px;height:5px;background:#d4d4d4"></div>
<svg class="abs" style="left:130px;top:35px" width="1756" height="630" viewBox="130 226 1756 630"><rect x="132.450" y="227.700" width="1.900" height="626.300" fill="#3a8fa1"/><rect x="132.450" y="227.700" width="1749.200" height="2" fill="#3a8fa1"/><rect x="1879.950" y="227.700" width="1.750" height="626.300" fill="#3a8fa1"/></svg>
<svg class="abs" style="left:960px;top:97px" width="210" height="56" viewBox="960 288 210 56"><rect x="969.300" y="294.900" width="187.300" height="37" fill="#ebf5f7" stroke="#4a91a1" stroke-width="3.600"/><rect x="1148.800" y="324" width="13.700" height="13.500" fill="#fff"/><rect x="1149.800" y="325" width="12.200" height="12" fill="#4a91a1"/></svg>
<div class="c" style="left:969px;top:104px;width:189px;height:37px;line-height:38px;letter-spacing:-0.4px;padding-left:4.5px">US</div>
</div>
<svg class="abs" style="left:200px;top:165px" width="84" height="40" viewBox="200 165 84 40"><path d="M210.300 196.400 L256.500 181.700" stroke="#e41a1c" stroke-width="3" stroke-linecap="butt"/><path d="M273.600 175.300 L252 172.100 L258.300 190.900 Z" fill="#e41a1c"/></svg>
<div id="vscroll">
<svg class="abs" style="left:5px;top:5px" width="14" height="12" viewBox="0 0 14 12"><path d="M6.500 0.800 L12.800 11.400 H0.200 Z" fill="#cfcfcf"/></svg>
<div class="abs" style="left:0;top:22px;width:21px;height:2px;background:#eeeeee"></div>
<div class="abs" style="left:3.600px;top:28.300px;width:15.500px;height:69.700px;border-radius:8px;background:#c1c1c1"></div>
<div class="abs" style="left:0;top:600px;width:21px;height:2px;background:#eeeeee"></div>
<svg class="abs" style="left:5px;top:609px" width="14" height="12" viewBox="0 0 14 12"><path d="M7 11 L13.300 0.600 H0.700 Z" fill="#c2c2c2"/></svg>
</div>
<div id="hscroll">
<div class="abs" style="left:0;top:0;width:1px;height:26px;background:#dcdcdc"></div>
<svg class="abs" style="left:6px;top:5px" width="12" height="14" viewBox="0 0 12 14"><path d="M1 7 L10.500 1 V13 Z" fill="#d2d2d2"/></svg>
<div class="abs" style="left:23px;top:0;width:2px;height:25px;background:#eeeeee"></div>
<div class="abs" style="left:28.500px;top:3.500px;width:757px;height:16px;border-radius:8px;background:#c1c1c1"></div>
<div class="abs" style="left:1727px;top:0;width:2px;height:25px;background:#eeeeee"></div>
<svg class="abs" style="left:1734px;top:5px" width="12" height="14" viewBox="0 0 12 14"><path d="M11.300 7 L0.500 0.600 V13.400 Z" fill="#c2c2c2"/></svg>
<div class="abs" style="left:1750px;top:0;width:2px;height:25px;background:#e7e7e7"></div>
</div>
<div id="bbar">
<svg class="abs" style="left:24px;top:24px" width="24" height="24" viewBox="0 0 24 24" fill="none" stroke="#111" stroke-width="2.900"><path d="M12 1.500 v21 M1.500 12 h21"/></svg>
<svg class="abs" style="left:99px;top:26px" width="28" height="20" viewBox="0 0 28 20" fill="none" stroke="#111" stroke-width="2.900"><path d="M1 2.500 h26 M1 10 h26 M1 17.500 h26"/></svg>
<div class="abs" style="left:152px;top:8px;width:247px;height:53px;background:#e0e0e0;border-radius:3px"></div>
<div class="tab" style="left:179.500px;color:#111;font-size:24.250px">My IP address list</div>
<div class="tab" style="left:431px">IP address database</div>
<div class="tab" style="left:710.500px;letter-spacing:0.180px">IP address geoip lookup</div>
</div>
</div></body></html>
